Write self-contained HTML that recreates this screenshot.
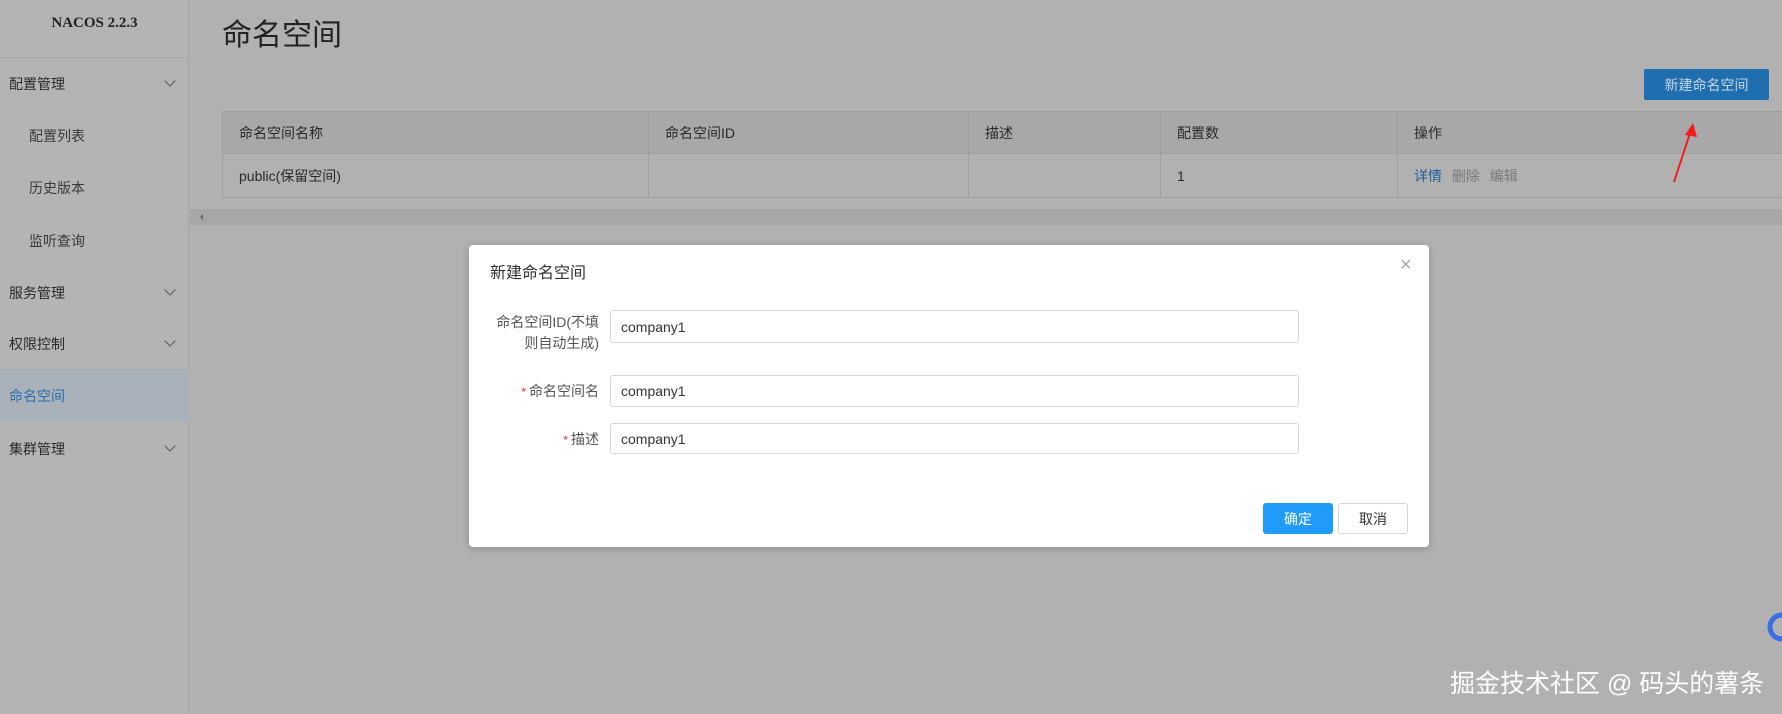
<!DOCTYPE html>
<html><head><meta charset="utf-8"><style>
*{margin:0;padding:0;box-sizing:border-box}
body{width:1782px;height:714px;background:#b1b1b1;font-family:"Liberation Sans","Noto Sans CJK SC",sans-serif;position:relative;overflow:hidden;color:#222;font-size:14px}
.abs{position:absolute}
.side{left:0;top:0;width:189px;height:714px;background:#b4b4b4;border-right:1px solid #a6a6a6}
.logo{left:0;top:15px;width:189px;text-align:center;font:bold 15px "Liberation Serif",serif;color:#222}
.sline{left:0;top:57px;width:189px;height:1px;background:#a6a6a6}
.mi{left:9px;color:#2a2a2a;font-size:14px}
.sub{left:29px;color:#3a3a3a;font-size:14px}
.chev{left:166px;width:8px;height:8px;border-right:1px solid #555;border-bottom:1px solid #555;transform:rotate(45deg)}
table{border-collapse:collapse}
td{border:1px solid #a0a0a0;padding-left:16px;font-size:14px;color:#2a2a2a}
.inp{left:610px;width:689px;border:1px solid #d6d6d6;border-radius:3px;padding-left:10px;font-size:14px;color:#333;display:flex;align-items:center;background:#fff}
.lab{width:140px;left:459px;text-align:right;color:#555;font-size:14px}
.req{color:#e0322c;font-size:12px;margin-right:3px}
</style></head><body>
<div class="abs side"></div>
<div class="abs logo">NACOS 2.2.3</div>
<div class="abs sline"></div>
<div class="abs mi" style="top:74px">配置管理</div><div class="abs chev" style="top:77px"></div>
<div class="abs sub" style="top:126px">配置列表</div>
<div class="abs sub" style="top:178px">历史版本</div>
<div class="abs sub" style="top:231px">监听查询</div>
<div class="abs mi" style="top:283px">服务管理</div><div class="abs chev" style="top:286px"></div>
<div class="abs mi" style="top:334px">权限控制</div><div class="abs chev" style="top:337px"></div>
<div class="abs" style="left:0;top:369px;width:189px;height:52px;background:#a9b2bb"></div>
<div class="abs mi" style="top:386px;color:#2a6ea8">命名空间</div>
<div class="abs mi" style="top:439px">集群管理</div><div class="abs chev" style="top:442px"></div>

<div class="abs" style="left:222px;top:10px;font-size:30px;color:#222">命名空间</div>
<div class="abs" style="left:1644px;top:69px;width:125px;height:31px;background:#1f6fb0;border-radius:2px;color:#c5d6e6;font-size:14px;display:flex;align-items:center;justify-content:center">新建命名空间</div>

<table class="abs" style="left:222px;top:111px;width:1561px">
<tr style="height:42px;background:#a8a8a8"><td style="width:426px">命名空间名称</td><td style="width:320px">命名空间ID</td><td style="width:192px">描述</td><td style="width:237px">配置数</td><td>操作</td></tr>
<tr style="height:44px;background:#b1b1b1"><td>public(保留空间)</td><td></td><td></td><td>1</td><td><span style="color:#1f5f9a">详情</span> <span style="color:#7a7a7a;margin-left:6px">删除</span> <span style="color:#7a7a7a;margin-left:6px">编辑</span></td></tr>
</table>
<div class="abs" style="left:190px;top:209px;width:1592px;height:16px;background:#a7a7a7"></div>
<div class="abs" style="left:197px;top:214px;width:0;height:0;border:3px solid transparent;border-right:3px solid #666"></div>

<svg class="abs" style="left:0;top:0" width="1782" height="714">
<line x1="1674" y1="182" x2="1691" y2="130" stroke="#f01c1c" stroke-width="2"/>
<polygon points="1693,123 1685,135 1697,137" fill="#f01c1c"/>
<line x1="1327" y1="434" x2="1320" y2="484" stroke="#f01c1c" stroke-width="2"/>
<polygon points="1318,494 1313,479 1325,481" fill="#f01c1c"/>
<circle cx="1782" cy="627" r="12" fill="none" stroke="#3a6ee8" stroke-width="5"/>
</svg>

<div class="abs" style="left:469px;top:245px;width:960px;height:302px;background:#fff;border-radius:4px;box-shadow:0 2px 8px rgba(0,0,0,.2)"></div>
<div class="abs" style="left:490px;top:259px;font-size:16px;color:#333">新建命名空间</div>
<div class="abs" style="left:1400px;top:254px;font-size:20px;color:#aaa;font-weight:200">×</div>
<div class="abs lab" style="top:312px;line-height:21px">命名空间ID(不填<br>则自动生成)</div>
<div class="abs inp" style="top:310px;height:33px">company1</div>
<div class="abs lab" style="top:381px"><span class="req">*</span>命名空间名</div>
<div class="abs inp" style="top:375px;height:32px">company1</div>
<div class="abs lab" style="top:429px"><span class="req">*</span>描述</div>
<div class="abs inp" style="top:423px;height:31px">company1</div>
<div class="abs" style="left:1263px;top:503px;width:70px;height:31px;background:#209bfa;border-radius:3px;color:#fff;display:flex;align-items:center;justify-content:center;font-size:14px">确定</div>
<div class="abs" style="left:1338px;top:503px;width:70px;height:31px;border:1px solid #d6d6d6;border-radius:3px;color:#333;display:flex;align-items:center;justify-content:center;font-size:14px">取消</div>

<div class="abs" style="left:1450px;top:664px;font-size:25px;color:#fff;white-space:nowrap">掘金技术社区 @ 码头的薯条</div>
</body></html>
